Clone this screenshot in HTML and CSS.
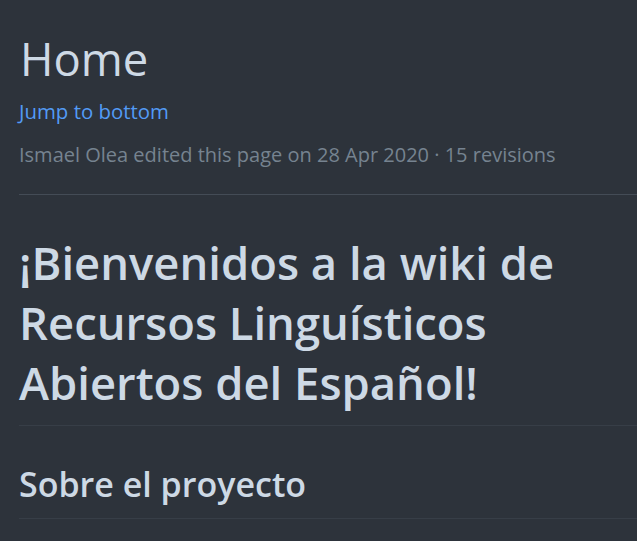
FILE: index.html
```html
<!DOCTYPE html>
<html lang="es">
<head>
<meta charset="utf-8">
<title>Home</title>
<link rel="stylesheet" href="styles.css">
</head>
<body>
<div class="page">
  <header class="wiki-header">
    <h1 class="wiki-title">Home</h1>
    <a class="jump" href="#bottom">Jump to bottom</a>
    <div class="meta">Ismael Olea edited this page on 28 Apr 2020 · 15 revisions</div>
  </header>
  <article class="markdown">
    <h1 class="md-h1">¡Bienvenidos a la wiki de Recursos Linguísticos Abiertos del Español!</h1>
    <h2 class="md-h2">Sobre el proyecto</h2>
  </article>
</div>
</body>
</html>
```

FILE: styles.css
```css
html, body {
  margin: 0;
  padding: 0;
  background: #2d333b;
}
body {
  font-family: "Open Sans", "Noto Sans", sans-serif;
  color: #cdd9e5;
  overflow: hidden;
}
.page {
  padding: 28px 0 0 19px;
}
.wiki-header {
  border-bottom: 1px solid #444c56;
  padding-bottom: 24px;
}
.wiki-title {
  margin: 0;
  font-size: 45.4px;
  font-weight: 400;
  line-height: 60px;
  color: #cdd9e5;
  padding-left: 1px;
}
.jump {
  display: block;
  margin-top: 8px;
  font-size: 20.4px;
  line-height: 30px;
  color: #539bf5;
  text-decoration: none;
}
.meta {
  margin-top: 14px;
  font-size: 20px;
  line-height: 30px;
  color: #768390;
}
.md-h1 {
  margin: 37px 0 0;
  padding-bottom: 13px;
  font-size: 45.4px;
  font-weight: 600;
  line-height: 60px;
  border-bottom: 1px solid #373e47;
  color: #cdd9e5;
}
.md-h2 {
  margin: 36px 0 0;
  padding-bottom: 11px;
  font-size: 34px;
  font-weight: 600;
  line-height: 45px;
  border-bottom: 1px solid #373e47;
  color: #cdd9e5;
}
```
